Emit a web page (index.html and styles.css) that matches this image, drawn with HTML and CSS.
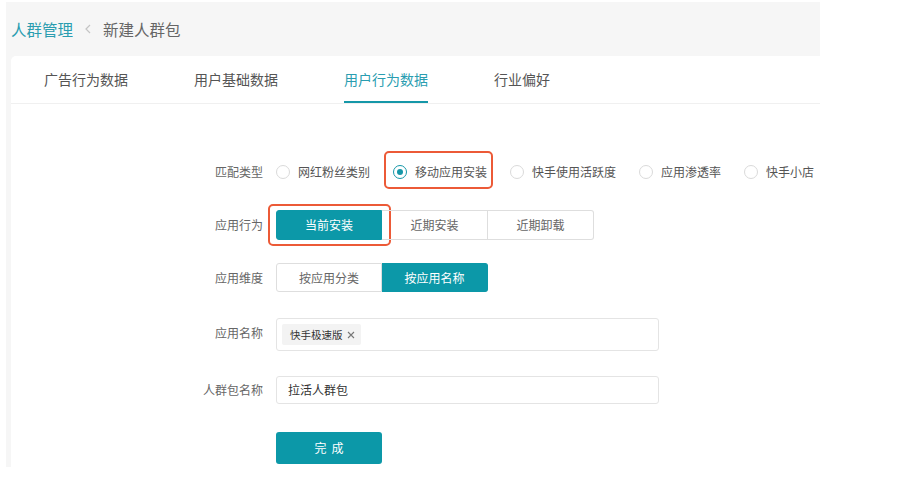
FILE: index.html
```html
<!DOCTYPE html>
<html lang="zh-CN">
<head>
<meta charset="utf-8">
<title>新建人群包</title>
<link rel="stylesheet" href="styles.css">
</head>
<body>
<div class="page">
  <div class="crumbs">
    <span class="crumb-link">人群管理</span>
    <svg class="crumb-sep" width="6" height="10" viewBox="0 0 6 10"><polyline points="5,1 1,5 5,9" fill="none" stroke="#c4c4c4" stroke-width="1.2"/></svg>
    <span class="crumb-cur">新建人群包</span>
  </div>
  <div class="card">
    <div class="tabs">
      <div class="tab">广告行为数据</div>
      <div class="tab">用户基础数据</div>
      <div class="tab active">用户行为数据</div>
      <div class="tab">行业偏好</div>
    </div>
    <div class="form">
      <div class="row row-match">
        <div class="label">匹配类型</div>
        <div class="radios">
          <div class="radio"><span class="dot"></span>网红粉丝类别</div>
          <div class="radio checked"><span class="dot"></span>移动应用安装<span class="mark mark-radio"></span></div>
          <div class="radio"><span class="dot"></span>快手使用活跃度</div>
          <div class="radio"><span class="dot"></span>应用渗透率</div>
          <div class="radio"><span class="dot"></span>快手小店</div>
        </div>
      </div>
      <div class="row row-action">
        <div class="label">应用行为</div>
        <div class="seg">
          <div class="seg-btn on">当前安装<span class="mark mark-btn"></span></div>
          <div class="seg-btn">近期安装</div>
          <div class="seg-btn">近期卸载</div>
        </div>
      </div>
      <div class="row row-dim">
        <div class="label">应用维度</div>
        <div class="seg seg-dim">
          <div class="seg-btn">按应用分类</div>
          <div class="seg-btn on">按应用名称</div>
        </div>
      </div>
      <div class="row row-app">
        <div class="label">应用名称</div>
        <div class="input input-tags">
          <span class="tag">快手极速版<svg class="tag-x" width="8" height="8" viewBox="0 0 8 8"><path d="M1 1L7 7M7 1L1 7" stroke="#777" stroke-width="1.1"/></svg></span>
        </div>
      </div>
      <div class="row row-name">
        <div class="label">人群包名称</div>
        <div class="input input-text">拉活人群包</div>
      </div>
      <div class="row row-submit">
        <div class="label"></div>
        <div class="submit">完成</div>
      </div>
    </div>
  </div>
</div>
</body>
</html>
```

FILE: styles.css
```css
html, body {
  margin: 0;
  padding: 0;
  background: #ffffff;
}
body {
  font-family: "Noto Sans CJK SC", "Noto Sans", sans-serif;
  color: #555;
}
.page {
  margin: 2px 0 0 6px;
  width: 814px;
  height: 465px;
  background: #f6f6f6;
  padding-left: 5px;
  box-sizing: border-box;
  display: flex;
  flex-direction: column;
}
.crumbs {
  height: 54px;
  display: flex;
  align-items: center;
  font-size: 15.5px;
  line-height: 20px;
}
.crumb-link { color: #2a9db0; }
.crumb-sep { margin: 0 12px 0 12px; }
.crumb-cur { color: #666; }

.card {
  flex: 1;
  background: #fff;
  border-top-left-radius: 5px;
}
.tabs {
  display: flex;
  height: 48px;
  border-bottom: 1px solid #f0f0f0;
  box-sizing: border-box;
}
.tab {
  margin: 0 33px;
  font-size: 14px;
  line-height: 46px;
  height: 47px;
  color: #555;
  box-sizing: border-box;
}
.tab.active {
  color: #2a9db0;
  border-bottom: 2px solid #1597a8;
}

.form {
  padding-top: 53px;
  display: flex;
  flex-direction: column;
}
.row {
  display: flex;
  align-items: center;
}
.label {
  width: 252px;
  flex: none;
  text-align: right;
  font-size: 12px;
  line-height: 16px;
  color: #666;
  margin-right: 13px;
}
.row-match { height: 30px; }
.row-action { margin-top: 23px; }
.row-dim { margin-top: 23px; }
.row-app { margin-top: 26px; align-items: flex-start; }
.row-app .label { margin-top: 7px; }
.row-name { margin-top: 25px; }
.row-submit { margin-top: 28px; }

.radios {
  display: flex;
  align-items: center;
  gap: 23px;
  white-space: nowrap;
}
.radio {
  position: relative;
  display: flex;
  align-items: center;
  height: 20px;
  font-size: 12px;
  line-height: 16px;
  color: #555;
}
.dot {
  width: 14px;
  height: 14px;
  border: 1px solid #dadada;
  border-radius: 50%;
  box-sizing: border-box;
  margin-right: 8px;
  position: relative;
  flex: none;
}
.radio.checked .dot { border-color: #1597a8; }
.radio.checked .dot::after {
  content: "";
  position: absolute;
  left: 3px;
  top: 3px;
  width: 6px;
  height: 6px;
  border-radius: 50%;
  background: #1597a8;
}

.mark {
  position: absolute;
  border: 2px solid #ec5a37;
  border-radius: 5px;
  pointer-events: none;
}
.mark-radio { left: -9px; right: -6px; top: -11px; bottom: -7px; }
.mark-btn { left: -9px; right: -10px; top: -7px; bottom: -7px; }

.seg {
  display: flex;
}
.seg-btn {
  position: relative;
  width: 106px;
  height: 30px;
  line-height: 28px;
  text-align: center;
  font-size: 12px;
  color: #666;
  box-sizing: border-box;
  border: 1px solid #dedede;
}
.seg-btn + .seg-btn { border-left: none; }
.seg-btn:first-child { border-radius: 3px 0 0 3px; }
.seg-btn:last-child { border-radius: 0 3px 3px 0; }
.seg-btn.on {
  background: #0c98a8;
  border-color: #0c98a8;
  color: #fff;
}
.seg-dim .seg-btn { height: 29px; line-height: 27px; }

.input {
  width: 383px;
  border: 1px solid #e4e4e4;
  border-radius: 3px;
  box-sizing: border-box;
  background: #fff;
}
.input-tags {
  height: 33px;
  padding: 5px 0 0 5px;
  display: flex;
  align-items: flex-start;
}
.tag {
  display: flex;
  align-items: center;
  height: 21px;
  padding: 0 6px 0 8px;
  background: #f3f3f3;
  border-radius: 2px;
  font-size: 10.5px;
  color: #333;
  line-height: 21px;
}
.tag-x { margin-left: 4px; }
.input-text {
  height: 28px;
  line-height: 26px;
  padding-left: 11px;
  font-size: 12px;
  color: #333;
}
.submit {
  width: 106px;
  height: 32px;
  line-height: 32px;
  text-align: center;
  background: #0c98a8;
  color: #fff;
  font-size: 12px;
  letter-spacing: 5px;
  text-indent: 5px;
  border-radius: 3px;
}
```
